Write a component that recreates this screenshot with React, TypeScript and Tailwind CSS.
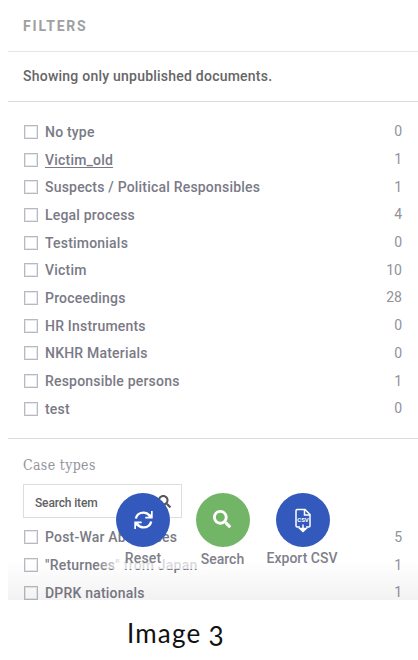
import React from "react";
import { FaSearch } from "react-icons/fa";

const types: [string, number][] = [
  ["No type", 0],
  ["Victim_old", 1],
  ["Suspects / Political Responsibles", 1],
  ["Legal process", 4],
  ["Testimonials", 0],
  ["Victim", 10],
  ["Proceedings", 28],
  ["HR Instruments", 0],
  ["NKHR Materials", 0],
  ["Responsible persons", 1],
  ["test", 0],
];

const cases: [string, number][] = [
  ["Post-War Abductees", 5],
  ['"Returnees" from Japan', 1],
  ["DPRK nationals", 1],
];

function Row({ label, count }: { label: string; count: number }) {
  return (
    <li className="flex h-[27.7px] items-center pl-4 pr-[16px] text-[#7a7a86]">
      <span className="size-[14px] shrink-0 border border-[#b9b9c4] bg-white shadow-[inset_0_0_0_1px_#e6e6eb]" />
      <span
        className={
          "ml-[7px] whitespace-nowrap text-[14px] font-medium leading-5 tracking-[0.2px] " +
          (label === "Victim_old" ? "underline underline-offset-2" : "")
        }
      >
        {label}
      </span>
      <span className="mb-px ml-auto text-[14px] leading-5 text-[#92929b]">{count}</span>
    </li>
  );
}

function RefreshIcon() {
  return (
    <svg viewBox="0 0 19 18" className="h-[18px] w-[19px]" fill="none" stroke="white" strokeWidth="2.4">
      <path d="M1.800 7.500C2.500 4 5.600 1.600 9.500 1.600C12 1.600 14 2.600 15.800 4.600" />
      <path d="M18.700 0V7.400H11.300V5.700H14.200L17 2.900V0Z" fill="white" stroke="none" />
      <path d="M17.200 10.500C16.500 14 13.400 16.400 9.500 16.400C7 16.400 5 15.400 3.200 13.400" />
      <path d="M0.300 18V10.600H7.700V12.300H4.800L2 15.100V18Z" fill="white" stroke="none" />
    </svg>
  );
}

function CsvIcon() {
  return (
    <svg viewBox="0 0 16 25" className="h-[25px] w-4" fill="none" stroke="white">
      <path d="M5 19H2.200Q1 19 1 17.800V2.700Q1 1.500 2.200 1.500H10L15 6.500V17.800Q15 19 13.800 19H11" strokeWidth="1.500" />
      <path d="M9.500 1.500V7H15" strokeWidth="1.500" />
      <path d="M8 16.500V20M4.800 20.500H11.200L8 23.500Z" fill="white" strokeWidth="1.500" />
      <text x="8" y="14.300" textAnchor="middle" fontSize="6" fontWeight="700" fontFamily="Roboto, sans-serif" fill="white" stroke="none">
        CSV
      </text>
    </svg>
  );
}

export default function App() {
  return (
    <main className="h-[660px] w-[418px] overflow-hidden bg-white font-['Roboto',sans-serif]">
      <section className="relative ml-2 h-[600px] overflow-hidden">
        <header className="flex h-[52px] items-center border-b border-[#e6e6e6] pl-[15px] pt-px text-[14px] font-bold tracking-[1.8px] text-[#a0a0a0]">
          FILTERS
        </header>
        <p className="flex h-[50px] items-center border-b border-[#dcdcde] pl-[15px] text-[14px] font-medium tracking-[0.23px] text-[#666]">
          Showing only unpublished documents.
        </p>
        <ul className="h-[337px] border-b border-[#dcdce0] pt-4">
          {types.map(([label, count]) => (
            <Row key={label} label={label} count={count} />
          ))}
        </ul>
        <h2 className="ml-[15px] mt-4 h-[29px] font-['DejaVu_Serif_Condensed','DejaVu_Serif',serif] text-[14px] leading-5 tracking-[0.35px] text-[#94949d]">
          Case types
        </h2>
        <div className="ml-[15px] flex h-[34px] w-[159px] items-center justify-between border border-[#dcdce3] bg-white pl-[11px] pr-[10px]">
          <span className="pt-[3px] text-[12px] font-medium tracking-[-0.15px] text-[#616161]">Search item</span>
          <FaSearch className="size-[13px] text-[#555]" />
        </div>
        <ul className="mt-[5.500px]">
          {cases.map(([label, count]) => (
            <Row key={label} label={label} count={count} />
          ))}
        </ul>

        <div className="absolute inset-x-0 bottom-0 h-10 bg-gradient-to-t from-black/5 to-transparent" />
        <div className="absolute left-[88px] top-[557px] h-[12px] w-[112px] bg-gradient-to-r from-transparent via-white/75 via-20% to-white/70" />

        <nav className="absolute left-[108px] top-[493px] flex items-start">
          <div className="flex w-[54px] flex-col items-center">
            <span className="flex size-[54px] items-center justify-center rounded-full bg-[#3259bb]">
              <RefreshIcon />
            </span>
            <span className="text-[14px] font-medium leading-[22px] tracking-[0.15px] text-[#7f7f8a]">Reset</span>
          </div>
          <div className="ml-[26px] flex w-[54px] flex-col items-center">
            <span className="flex size-[54px] items-center justify-center rounded-full bg-[#73b566]">
              <FaSearch className="mb-[3px] mr-[2px] size-[18px] text-white" />
            </span>
            <span className="mr-px mt-px text-[14px] font-medium leading-[22px] text-[#7f7f8a]">Search</span>
          </div>
          <div className="ml-[26px] flex w-[54px] flex-col items-center">
            <span className="flex size-[54px] items-center justify-center rounded-full bg-[#3259bb]">
              <CsvIcon />
            </span>
            <span className="mr-[2px] whitespace-nowrap text-[14px] font-medium leading-[22px] text-[#7f7f8a]">Export CSV</span>
          </div>
        </nav>
      </section>
      <p className="ml-[127px] mt-[17px] flex font-['Lato',sans-serif] text-[26px] leading-8 tracking-[1.2px] text-[#111]">
        <span>Image</span>
        <span className="ml-[7px] mt-[3px]">3</span>
      </p>
    </main>
  );
}
